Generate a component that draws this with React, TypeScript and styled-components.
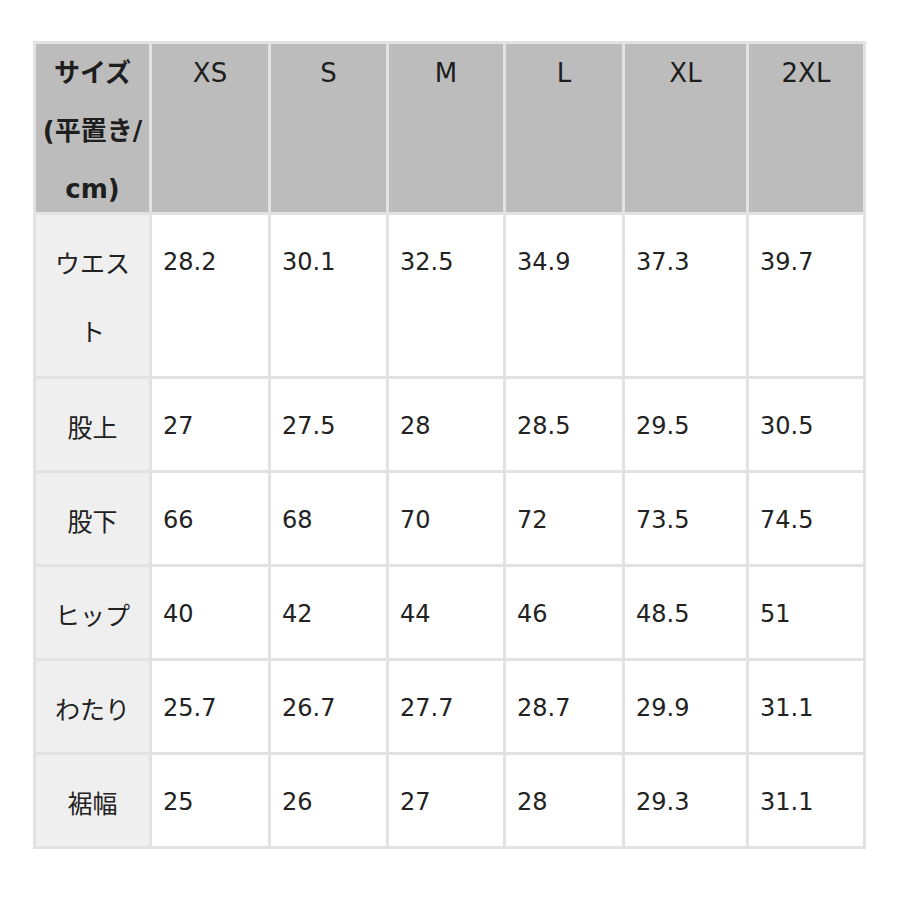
import React from "react";
import styled, { createGlobalStyle } from "styled-components";

const GlobalStyle = createGlobalStyle`
  html, body {
    margin: 0;
    padding: 0;
    background: #ffffff;
  }
  body {
    font-family: "DejaVu Sans", "Noto Sans CJK JP", sans-serif;
    color: #222222;
  }
`;

const sizes = ["XS", "S", "M", "L", "XL", "2XL"];

const rows: { label: React.ReactNode; values: string[] }[] = [
  { label: <>ウエス<br />ト</>, values: ["28.2", "30.1", "32.5", "34.9", "37.3", "39.7"] },
  { label: "股上", values: ["27", "27.5", "28", "28.5", "29.5", "30.5"] },
  { label: "股下", values: ["66", "68", "70", "72", "73.5", "74.5"] },
  { label: "ヒップ", values: ["40", "42", "44", "46", "48.5", "51"] },
  { label: "わたり", values: ["25.7", "26.7", "27.7", "28.7", "29.9", "31.1"] },
  { label: "裾幅", values: ["25", "26", "27", "28", "29.3", "31.1"] },
];

const Page = styled.div`
  padding: 41px 0 0 33px;
`;

const SizeGrid = styled.div`
  display: grid;
  grid-template-columns: 113px 116px 115px 114px 116px 121px 114px;
  grid-template-rows: 168px 161px repeat(5, 91px);
  gap: 3px;
  padding: 3px;
  width: max-content;
  background: #e2e2e2;
`;

const HeadCell = styled.div<{ $first?: boolean }>`
  background: #bcbcbc;
  font-family: "DejaVu Sans", "Noto Sans CJK JP", sans-serif;
  font-size: 26px;
  font-weight: ${(p) => (p.$first ? 700 : 400)};
  line-height: 58px;
  text-align: center;
  color: #1e1e1e;
  white-space: nowrap;
`;

const LabelCell = styled.div`
  background: #efefef;
  font-family: "Noto Sans CJK JP", sans-serif;
  font-size: 25px;
  line-height: 68px;
  padding-top: 13px;
  text-align: center;
  color: #222222;
`;

const ValueCell = styled.div`
  background: #ffffff;
  font-family: "DejaVu Sans", sans-serif;
  font-size: 24px;
  line-height: 68px;
  padding: 13px 0 0 11px;
  color: #222222;
`;

export default function App() {
  return (
    <>
      <GlobalStyle />
      <Page>
        <SizeGrid>
          <HeadCell $first>
            サイズ<br />(平置き/<br />cm)
          </HeadCell>
          {sizes.map((s) => (
            <HeadCell key={s}>{s}</HeadCell>
          ))}
          {rows.map((r, i) => (
            <React.Fragment key={i}>
              <LabelCell>{r.label}</LabelCell>
              {r.values.map((v, j) => (
                <ValueCell key={j}>{v}</ValueCell>
              ))}
            </React.Fragment>
          ))}
        </SizeGrid>
      </Page>
    </>
  );
}
